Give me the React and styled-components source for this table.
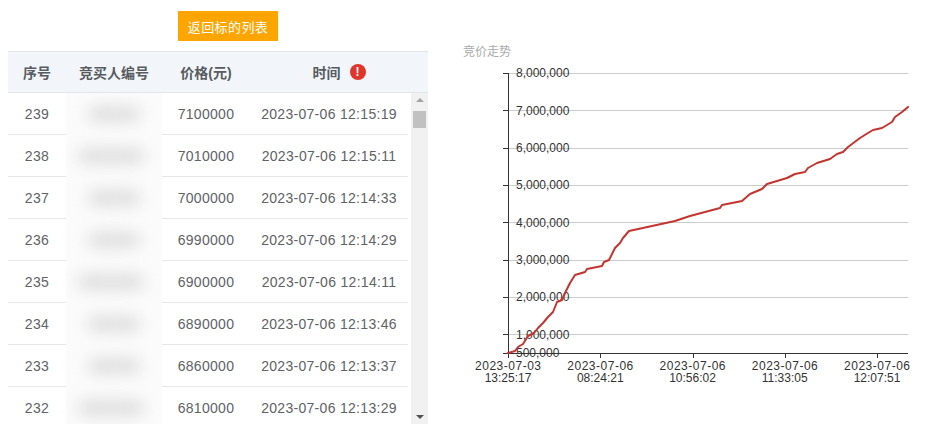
import React from 'react';
import styled, { createGlobalStyle } from 'styled-components';

const GlobalStyle = createGlobalStyle`
  html, body { margin: 0; padding: 0; background: #fff; }
  body { font-family: "Liberation Sans", "Noto Sans CJK SC", sans-serif; }
`;

const Page = styled.div`
  display: flex;
  align-items: flex-start;
  width: 929px;
  height: 435px;
  overflow: hidden;
`;

const LeftPanel = styled.section`
  width: 420px;
  margin-left: 8px;
  display: flex;
  flex-direction: column;
`;

const ButtonBar = styled.div`
  display: flex;
  padding: 11px 0 10px 170px;
`;

const BackButton = styled.button`
  width: 100px;
  height: 30px;
  padding: 0;
  border: 0;
  border-radius: 0;
  background: #ffa500;
  color: #fff;
  font-family: "Noto Sans CJK SC", sans-serif;
  font-size: 13px;
  letter-spacing: 0.4px;
  cursor: pointer;
`;

const Table = styled.div`
  display: flex;
  flex-direction: column;
`;

const HeaderRow = styled.div`
  display: grid;
  grid-template-columns: 58px 96px 88px 178px;
  height: 42px;
  box-sizing: border-box;
  background: #f2f6fa;
  border-top: 1px solid #e3e5e8;
  border-bottom: 1px solid #e3e5e8;
`;

const HeaderCell = styled.div`
  display: flex;
  align-items: center;
  justify-content: center;
  gap: 9px;
  font-family: "Liberation Sans", "Noto Sans CJK SC", sans-serif;
  font-size: 14px;
  font-weight: 700;
  color: #585b61;
`;

const ErrorBadge = styled.span`
  display: inline-flex;
  align-items: center;
  justify-content: center;
  width: 16px;
  height: 16px;
  border-radius: 50%;
  background: #e0352b;
  color: #fff;
  font-size: 12px;
  font-weight: 700;
  line-height: 1;
`;

const Body = styled.div`
  display: flex;
  align-items: stretch;
  height: 331px;
  overflow: hidden;
`;

const Viewport = styled.div`
  width: 400px;
  overflow: hidden;
`;

const Scrollbar = styled.div`
  width: 17px;
  margin-left: 3px;
  display: flex;
  flex-direction: column;
  background: #f1f1f1;
`;

const ScrollButton = styled.div`
  height: 17px;
  display: flex;
  align-items: center;
  justify-content: center;
  &::before {
    content: '';
    width: 0;
    height: 0;
    border-left: 4px solid transparent;
    border-right: 4px solid transparent;
    ${(p) =>
      p.$dir === 'up'
        ? 'border-bottom: 4px solid #a3a3a3; margin-top: -4px;'
        : 'border-top: 4px solid #505050; margin-top: 2px;'}
  }
`;

const ScrollTrack = styled.div`
  flex: 1;
  display: flex;
  flex-direction: column;
`;

const ScrollThumb = styled.div`
  height: 17px;
  margin: 1px 2px 0;
  background: #c1c1c1;
`;

const Row = styled.div`
  display: grid;
  grid-template-columns: 58px 96px 88px 158px;
  height: 42px;
`;

const Cell = styled.div`
  display: flex;
  align-items: center;
  justify-content: center;
  box-sizing: border-box;
  border-bottom: ${(p) => (p.$masked ? '0' : '1px solid #e6e7ea')};
  background: ${(p) => (p.$masked ? '#fbfbfb' : '#fff')};
  font-size: 14px;
  letter-spacing: 0.3px;
  color: #606266;
  white-space: nowrap;
`;

const Blurred = styled.span`
  display: block;
  width: ${(p) => p.$w}px;
  height: 14px;
  margin-left: ${(p) => p.$shift}px;
  border-radius: 7px;
  background: #dadada;
  filter: blur(8px);
`;

const ChartPanel = styled.section`
  width: 489px;
  margin-left: 12px;
  display: flex;
  flex-direction: column;
`;

const ChartTitle = styled.div`
  margin: 44px 0 2px 23px;
  font-family: "Noto Sans CJK SC", sans-serif;
  font-size: 12px;
  line-height: 14px;
  color: #aaa;
`;

const ChartSvg = styled.svg`
  display: block;
  font-family: "Liberation Sans", sans-serif;
`;

/* ---------- data ---------- */
const rows = [
  [239, 7100000, '2023-07-06 12:15:19'],
  [238, 7010000, '2023-07-06 12:15:11'],
  [237, 7000000, '2023-07-06 12:14:33'],
  [236, 6990000, '2023-07-06 12:14:29'],
  [235, 6900000, '2023-07-06 12:14:11'],
  [234, 6890000, '2023-07-06 12:13:46'],
  [233, 6860000, '2023-07-06 12:13:37'],
  [232, 6810000, '2023-07-06 12:13:29'],
];

/* ---------- chart geometry (svg origin at page 440,60) ---------- */
const OX = 440;
const OY = 60;
const X0 = 68;
const X1 = 468;
const YB = 293;
const PX_PER_M = 37.333;
const yFor = (v) => YB - ((v - 500000) / 1e6) * PX_PER_M;

const gridValues = [1, 2, 3, 4, 5, 6, 7, 8].map((m) => m * 1e6);
const yLabels = [
  [500000, '500,000'],
  [1e6, '1,000,000'],
  [2e6, '2,000,000'],
  [3e6, '3,000,000'],
  [4e6, '4,000,000'],
  [5e6, '5,000,000'],
  [6e6, '6,000,000'],
  [7e6, '7,000,000'],
  [8e6, '8,000,000'],
];
const xLabels = [
  ['2023-07-03', '13:25:17'],
  ['2023-07-06', '08:24:21'],
  ['2023-07-06', '10:56:02'],
  ['2023-07-06', '11:33:05'],
  ['2023-07-06', '12:07:51'],
];

const keyPoints = [
  [508, 353], [515, 351], [518, 347], [523, 344], [528, 336], [534, 333], [538, 328],
  [543, 323], [548, 317], [553, 312], [557, 302], [562, 300], [566, 291], [570, 283],
  [575, 275], [585, 272], [587, 269], [602, 266], [604, 262], [609, 260], [615, 248],
  [620, 243], [623, 238], [629, 231], [675, 221], [690, 216], [720, 208], [722, 205],
  [742, 201], [750, 194], [762, 189], [767, 184], [787, 178], [795, 174], [805, 172],
  [808, 168], [817, 163], [830, 159], [837, 154], [843, 152], [848, 147], [860, 138],
  [868, 133], [873, 130], [882, 128], [892, 122], [895, 117], [902, 112], [908, 107],
];
const linePath = keyPoints
  .map(([x, y], i) => `${i ? 'L' : 'M'}${(x - OX).toFixed(1)} ${(y - OY).toFixed(1)}`)
  .join(' ');

function PriceChart() {
  return (
    <ChartSvg width="489" height="375" viewBox="0 0 489 375">
      {gridValues.map((v) => (
        <line key={v} x1={X0} x2={X1} y1={Math.round(yFor(v)) + 0.5} y2={Math.round(yFor(v)) + 0.5} stroke="#ccc" />
      ))}
      {[...gridValues, 500000].map((v) => (
        <line key={'t' + v} x1={X0 - 5} x2={X0} y1={Math.round(yFor(v)) + 0.5} y2={Math.round(yFor(v)) + 0.5} stroke="#333" />
      ))}
      <line x1={X0 + 0.5} x2={X0 + 0.5} y1={Math.round(yFor(8e6))} y2={YB + 0.5} stroke="#333" />
      <line x1={X0} x2={X1} y1={YB + 0.5} y2={YB + 0.5} stroke="#333" />
      {xLabels.map((_, i) => {
        const x = Math.round(X0 + i * 92.25) + 0.5;
        return <line key={'xt' + i} x1={x} x2={x} y1={YB} y2={YB + 5} stroke="#333" />;
      })}
      {yLabels.map(([v, t]) => (
        <text key={t} x={X0 + 8} y={yFor(v) + 4.3} fontSize="12" fill="#333">
          {t}
        </text>
      ))}
      {xLabels.map(([d, t], i) => {
        const x = X0 + i * 92.25;
        return (
          <g key={'xl' + i}>
            <text x={x} y={310} fontSize="12" fill="#333" textAnchor="middle" textLength="66" lengthAdjust="spacing">
              {d}
            </text>
            <text x={x} y={322} fontSize="12" fill="#333" textAnchor="middle">
              {t}
            </text>
          </g>
        );
      })}
      <path d={linePath} fill="none" stroke="#c23531" strokeWidth="2" strokeLinejoin="round" strokeLinecap="round" />
    </ChartSvg>
  );
}

export default function App() {
  return (
    <>
      <GlobalStyle />
      <Page>
        <LeftPanel>
          <ButtonBar>
            <BackButton type="button">返回标的列表</BackButton>
          </ButtonBar>
          <Table>
            <HeaderRow>
              <HeaderCell>序号</HeaderCell>
              <HeaderCell>竞买人编号</HeaderCell>
              <HeaderCell>价格(元)</HeaderCell>
              <HeaderCell>
                时间
                <ErrorBadge>!</ErrorBadge>
              </HeaderCell>
            </HeaderRow>
            <Body>
              <Viewport>
                {rows.map(([no, price, time], i) => (
                  <Row key={no}>
                    <Cell>{no}</Cell>
                    <Cell $masked>
                      <Blurred $w={i % 3 === 1 ? 66 : 52} $shift={i % 3 === 1 ? -6 : 0} />
                    </Cell>
                    <Cell>{price}</Cell>
                    <Cell>{time}</Cell>
                  </Row>
                ))}
              </Viewport>
              <Scrollbar>
                <ScrollButton $dir="up" />
                <ScrollTrack>
                  <ScrollThumb />
                </ScrollTrack>
                <ScrollButton $dir="down" />
              </Scrollbar>
            </Body>
          </Table>
        </LeftPanel>
        <ChartPanel>
          <ChartTitle>竞价走势</ChartTitle>
          <PriceChart />
        </ChartPanel>
      </Page>
    </>
  );
}
